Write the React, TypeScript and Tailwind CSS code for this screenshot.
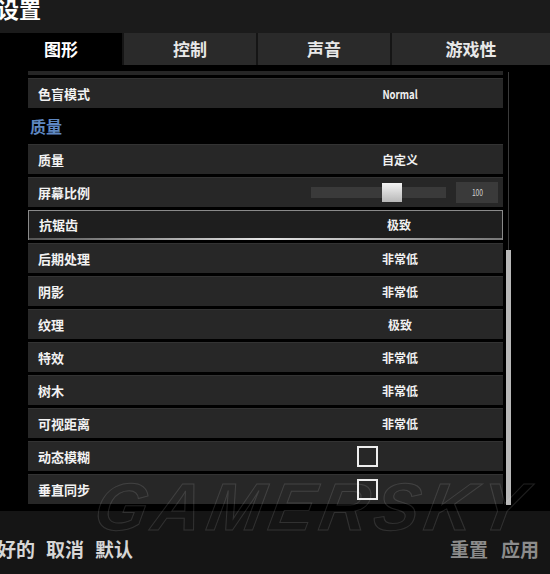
const FONT = "font-['Noto_Sans_CJK_SC','Noto_Sans',sans-serif]";

const TABS = ["图形", "控制", "声音", "游戏性"];

type Row = {
  label: string;
  value?: string;
  kind?: "text" | "slider" | "check";
  active?: boolean;
};

const QUALITY_ROWS: Row[] = [
  { label: "质量", value: "自定义" },
  { label: "屏幕比例", kind: "slider" },
  { label: "抗锯齿", value: "极致", active: true },
  { label: "后期处理", value: "非常低" },
  { label: "阴影", value: "非常低" },
  { label: "纹理", value: "极致" },
  { label: "特效", value: "非常低" },
  { label: "树木", value: "非常低" },
  { label: "可视距离", value: "非常低" },
  { label: "动态模糊", kind: "check" },
  { label: "垂直同步", kind: "check" },
];

function SettingRow({ row }: { row: Row }) {
  const kind = row.kind ?? "text";
  return (
    <div
      className={
        row.active
          ? "relative flex h-[30px] items-center border border-[#8a8a8a] bg-[#1e1e1e]"
          : "flex h-[30px] items-center border-t border-[#333] bg-[#272727]"
      }
    >
      <div className="flex-1 pl-[10px] text-[13px] font-bold text-[#f2f2f2]">
        {row.label}
      </div>
      {kind === "text" && (
        <div className="w-[206px] text-center text-[12px] font-bold text-[#f0f0f0]">
          {row.value === "Normal" ? (
            <span className="inline-block scale-x-[0.8]">{row.value}</span>
          ) : (
            row.value
          )}
        </div>
      )}
      {kind === "slider" && (
        <div className="flex items-center pr-[5px]">
          <div className="relative h-[11px] w-[135px] bg-[#3a3a3a]">
            <div className="absolute left-[71px] top-[-4px] h-[19px] w-[20px] bg-gradient-to-b from-[#f4f4f4] to-[#b8b8b8]" />
          </div>
          <div className="ml-[10px] flex h-[21px] w-[42px] items-center justify-center bg-[#3a3a3a] text-[9px] text-[#d0d0d0]">
            <span className="inline-block scale-x-75">100</span>
          </div>
        </div>
      )}
      {kind === "check" && (
        <div className="w-[206px] pl-[60px]">
          <div className="h-[21px] w-[21px] border-2 border-[#eeeeee]" />
        </div>
      )}
      {row.active && (
        <div className="absolute bottom-[-1px] left-0 right-0 h-[2px] bg-gradient-to-r from-[#555] via-[#e8e8e8] to-[#777]" />
      )}
    </div>
  );
}

export default function App() {
  return (
    <div
      className={`relative h-[574px] w-[550px] overflow-hidden bg-black ${FONT}`}
    >
      <div className="flex h-[33px] items-start overflow-hidden bg-[#1b1b1b]">
        <div className="-ml-[3px] -mt-[7px] text-[22px] font-bold leading-[30px] text-white">
          设置
        </div>
      </div>

      <div className="flex h-[32px]">
        {TABS.map((tab, i) => (
          <div
            key={tab}
            className={
              i === 0
                ? "flex w-[122px] items-center justify-center bg-black text-[17px] font-bold text-white"
                : i === 3
                  ? "flex flex-1 items-center justify-center border-l-2 border-[#151515] bg-[#2a2a2a] text-[17px] font-bold text-[#e8e8e8]"
                  : "flex w-[134px] items-center justify-center border-l-2 border-[#151515] bg-[#2a2a2a] text-[17px] font-bold text-[#e8e8e8]"
            }
          >
            {tab}
          </div>
        ))}
      </div>

      <div className="flex h-[446px]">
        <div className="ml-[28px] flex w-[475px] flex-col">
          <div className="mt-[6px] h-[4px] bg-[#262626]" />
          <div className="mt-[3px]">
            <SettingRow row={{ label: "色盲模式", value: "Normal" }} />
          </div>
          <div className="flex h-[36px] items-center pl-[2px] text-[16px] font-bold text-[#5f88c2]">
            质量
          </div>
          <div className="flex flex-col gap-[3px]">
            {QUALITY_ROWS.map((row) => (
              <SettingRow key={row.label} row={row} />
            ))}
          </div>
        </div>
        <div className="ml-[3px] flex w-[5px] flex-col items-center pt-[7px]">
          <div className="h-[178px] w-px bg-[#3a3a3a]" />
          <div className="h-[255px] w-[5px] bg-[#b9b9b9]" />
        </div>
      </div>

      <div className="flex h-[63px] items-center justify-between bg-[#151515] pt-[11px]">
        <div className="-ml-[3px] flex gap-[11px] text-[19px] font-bold leading-none text-[#d6d6d6]">
          <span>好的</span>
          <span>取消</span>
          <span>默认</span>
        </div>
        <div className="mr-[11px] flex gap-[13px] text-[19px] font-bold leading-none text-[#8c8c8c]">
          <span>重置</span>
          <span>应用</span>
        </div>
      </div>

      <div className="pointer-events-none absolute left-[96px] top-[483px] -skew-x-[10deg] font-['Liberation_Sans',sans-serif] text-[67px] font-bold italic leading-[48px] tracking-[6px] text-transparent [-webkit-text-stroke:1px_rgba(255,255,255,0.12)]">
        GAMERSKY
      </div>
    </div>
  );
}
